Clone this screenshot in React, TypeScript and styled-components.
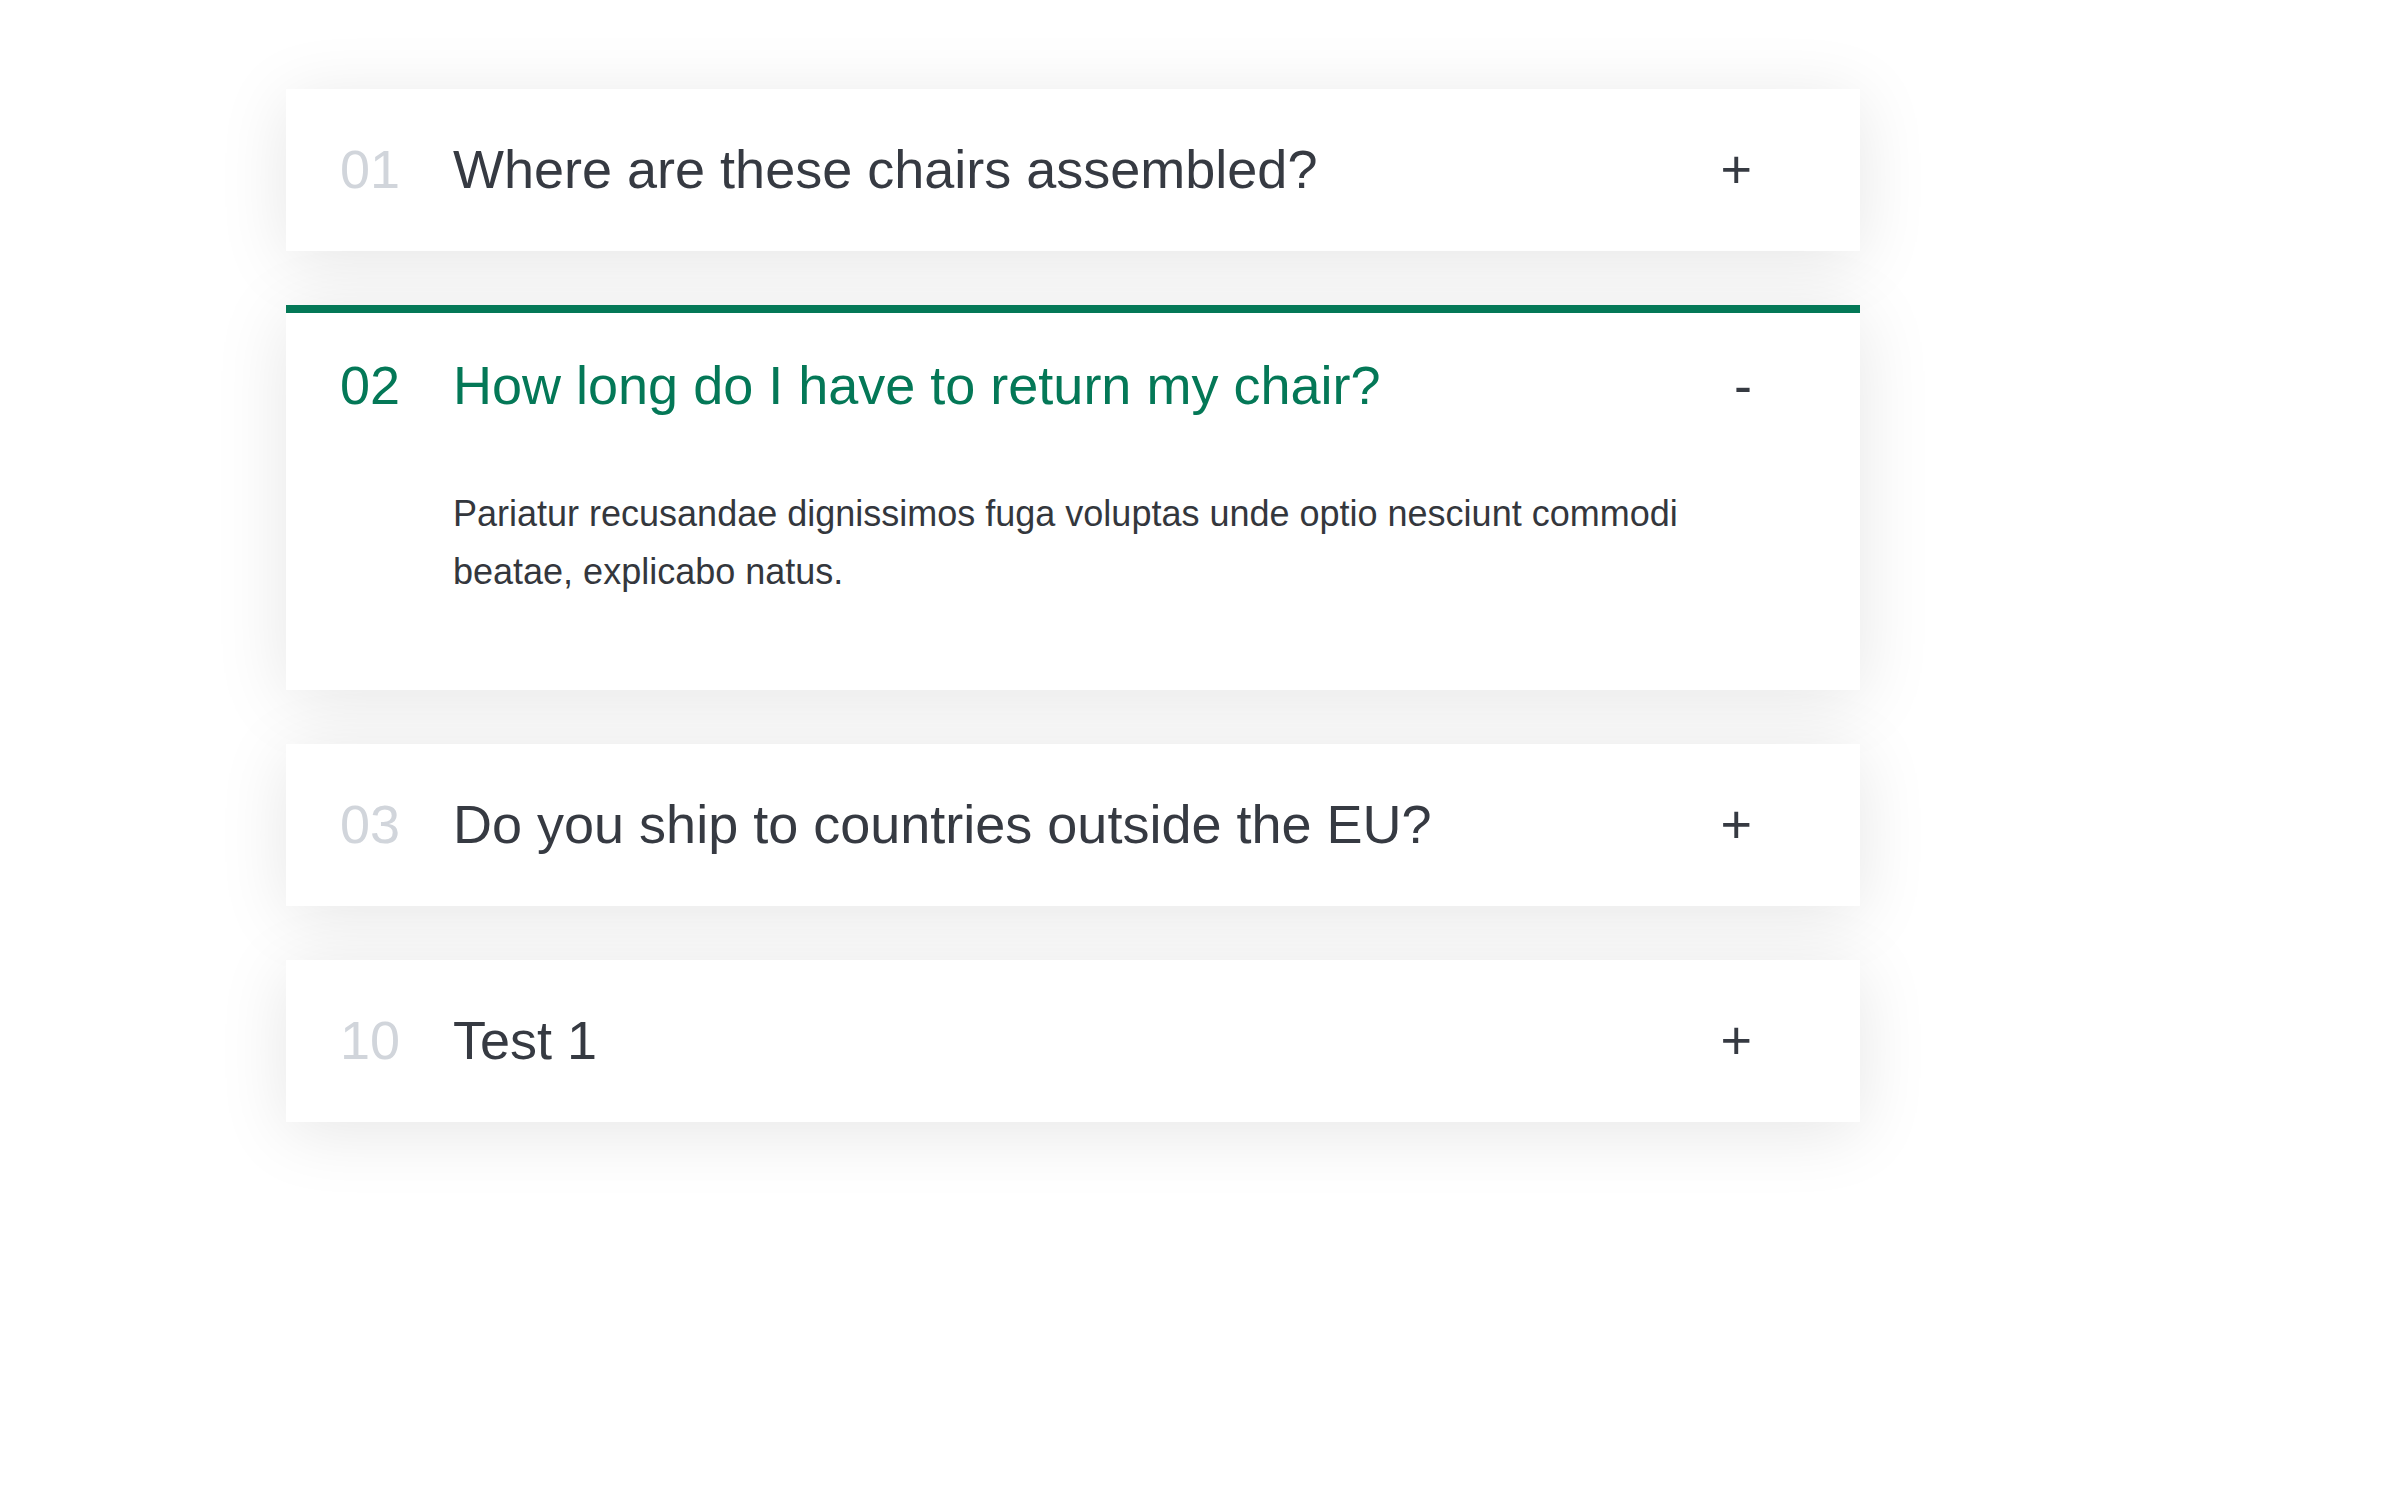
import React, { useState } from "react";
import styled, { createGlobalStyle } from "styled-components";

const GlobalStyle = createGlobalStyle`
  html, body {
    margin: 0;
    padding: 0;
    background: #ffffff;
  }
  body {
    font-family: "Liberation Sans", Arial, Helvetica, sans-serif;
    -webkit-font-smoothing: antialiased;
  }
`;

const GREEN = "#047857";

const Page = styled.main`
  padding: 89px 0 200px 286px;
`;

const List = styled.div`
  width: 1574px;
  display: flex;
  flex-direction: column;
  gap: 54px;
`;

const Item = styled.div<{ $open: boolean }>`
  background: #ffffff;
  border-top: 8px solid ${(p) => (p.$open ? GREEN : "#ffffff")};
  box-shadow: 0 10px 70px rgba(0, 0, 0, 0.1);
`;

const Header = styled.button`
  all: unset;
  box-sizing: border-box;
  width: 100%;
  display: flex;
  align-items: center;
  padding: 41px 108px 51px 54px;
  cursor: pointer;
  font-family: "Liberation Sans", Arial, Helvetica, sans-serif;
  font-size: 54px;
  line-height: 62px;
`;

const Number = styled.span<{ $open: boolean }>`
  width: 113px;
  flex: none;
  color: ${(p) => (p.$open ? GREEN : "#d1d5db")};
`;

const Question = styled.span<{ $open: boolean }>`
  flex: 1;
  color: ${(p) => (p.$open ? GREEN : "#363a42")};
`;

const Toggle = styled.span`
  flex: none;
  width: 40px;
  text-align: right;
  color: #363a42;
`;

const Answer = styled.div`
  padding: 18px 108px 90px 167px;
  font-size: 36px;
  line-height: 57.6px;
  color: #34373d;
`;

const faqs = [
  {
    num: "01",
    q: "Where are these chairs assembled?",
    a: "Pariatur recusandae dignissimos fuga voluptas unde optio nesciunt commodi beatae, explicabo natus.",
  },
  {
    num: "02",
    q: "How long do I have to return my chair?",
    a: "Pariatur recusandae dignissimos fuga voluptas unde optio nesciunt commodi beatae, explicabo natus.",
  },
  {
    num: "03",
    q: "Do you ship to countries outside the EU?",
    a: "Pariatur recusandae dignissimos fuga voluptas unde optio nesciunt commodi beatae, explicabo natus.",
  },
  {
    num: "10",
    q: "Test 1",
    a: "Pariatur recusandae dignissimos fuga voluptas unde optio nesciunt commodi beatae, explicabo natus.",
  },
];

export default function App() {
  const [openIdx, setOpenIdx] = useState<number | null>(1);
  return (
    <>
      <GlobalStyle />
      <Page>
        <List>
          {faqs.map((f, i) => {
            const open = openIdx === i;
            return (
              <Item key={f.num} $open={open}>
                <Header onClick={() => setOpenIdx(open ? null : i)}>
                  <Number $open={open}>{f.num}</Number>
                  <Question $open={open}>{f.q}</Question>
                  <Toggle>{open ? "-" : "+"}</Toggle>
                </Header>
                {open && <Answer>{f.a}</Answer>}
              </Item>
            );
          })}
        </List>
      </Page>
    </>
  );
}
